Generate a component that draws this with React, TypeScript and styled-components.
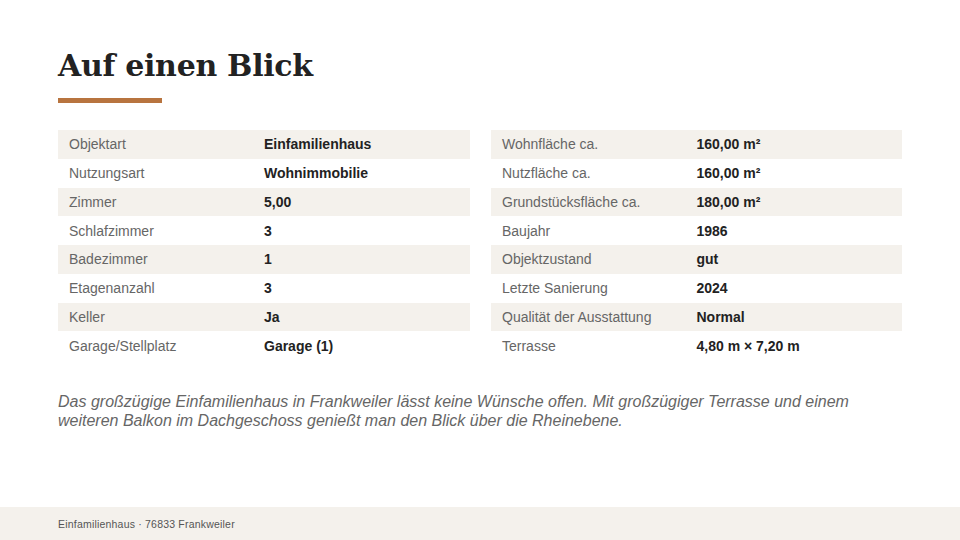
import React from "react";
import styled, { createGlobalStyle } from "styled-components";

type Fact = {
  label: string;
  value: string;
};

const leftFacts: Fact[] = [
  { label: "Objektart", value: "Einfamilienhaus" },
  { label: "Nutzungsart", value: "Wohnimmobilie" },
  { label: "Zimmer", value: "5,00" },
  { label: "Schlafzimmer", value: "3" },
  { label: "Badezimmer", value: "1" },
  { label: "Etagenanzahl", value: "3" },
  { label: "Keller", value: "Ja" },
  { label: "Garage/Stellplatz", value: "Garage (1)" },
];

const rightFacts: Fact[] = [
  { label: "Wohnfläche ca.", value: "160,00 m²" },
  { label: "Nutzfläche ca.", value: "160,00 m²" },
  { label: "Grundstücksfläche ca.", value: "180,00 m²" },
  { label: "Baujahr", value: "1986" },
  { label: "Objektzustand", value: "gut" },
  { label: "Letzte Sanierung", value: "2024" },
  { label: "Qualität der Ausstattung", value: "Normal" },
  { label: "Terrasse", value: "4,80 m × 7,20 m" },
];

const GlobalStyle = createGlobalStyle`
  html, body {
    margin: 0;
    padding: 0;
    background: #ffffff;
  }
  body {
    font-family: "Liberation Sans", Arial, sans-serif;
  }
`;

const Slide = styled.div`
  width: 960px;
  height: 540px;
  display: flex;
  flex-direction: column;
  background: #ffffff;
  overflow: hidden;
`;

const Content = styled.div`
  flex: 1;
  padding: 46px 58px 0 58px;
  display: flex;
  flex-direction: column;
`;

const Title = styled.h1`
  margin: 0;
  font-family: "DejaVu Serif", Georgia, serif;
  font-weight: 700;
  font-size: 30px;
  line-height: 40px;
  letter-spacing: -0.3px;
  color: #222222;
`;

const Accent = styled.div`
  width: 104px;
  height: 5px;
  margin-top: 12px;
  background: #b8743f;
`;

const Tables = styled.div`
  margin-top: 27px;
  display: grid;
  grid-template-columns: 412px 411px;
  column-gap: 21px;
`;

const Table = styled.div`
  display: flex;
  flex-direction: column;
`;

const Row = styled.div<{ $shaded: boolean }>`
  height: 28.75px;
  display: grid;
  grid-template-columns: 1fr 1fr;
  align-items: center;
  background: ${(p) => (p.$shaded ? "#f4f1ec" : "transparent")};
`;

const Label = styled.span`
  padding-left: 11px;
  font-size: 14px;
  color: #666666;
`;

const Value = styled.span`
  font-size: 14px;
  font-weight: 700;
  color: #222222;
`;

const Description = styled.p`
  margin: 32px 0 0 0;
  width: 800px;
  font-size: 16px;
  line-height: 19px;
  font-style: italic;
  color: #666666;
`;

const Footer = styled.div`
  height: 33px;
  padding: 0 58px;
  display: flex;
  align-items: center;
  background: #f4f1ec;
  font-size: 10.5px;
  letter-spacing: 0.2px;
  color: #555555;
`;

const FactTable = ({ facts }: { facts: Fact[] }) => (
  <Table>
    {facts.map((f, i) => (
      <Row key={f.label} $shaded={i % 2 === 0}>
        <Label>{f.label}</Label>
        <Value>{f.value}</Value>
      </Row>
    ))}
  </Table>
);

const App = () => {
  return (
    <>
      <GlobalStyle />
      <Slide>
        <Content>
          <Title>Auf einen Blick</Title>
          <Accent />
          <Tables>
            <FactTable facts={leftFacts} />
            <FactTable facts={rightFacts} />
          </Tables>
          <Description>
            Das großzügige Einfamilienhaus in Frankweiler lässt keine Wünsche
            offen. Mit großzügiger Terrasse und einem weiteren Balkon im
            Dachgeschoss genießt man den Blick über die Rheinebene.
          </Description>
        </Content>
        <Footer>Einfamilienhaus · 76833 Frankweiler</Footer>
      </Slide>
    </>
  );
};

export default App;
